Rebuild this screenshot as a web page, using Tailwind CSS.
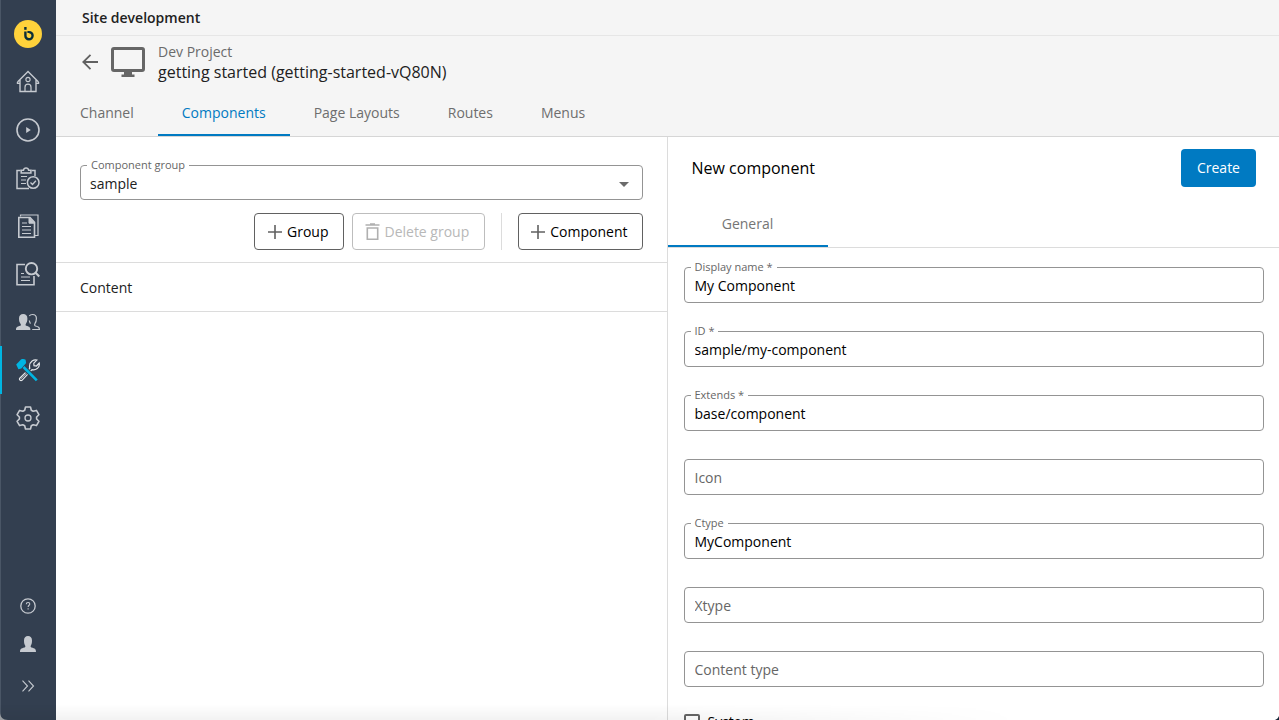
<!DOCTYPE html>
<html lang="en">
<head>
    <meta charset="UTF-8">
    <meta name="viewport" content="width=device-width, initial-scale=1.0">
    <title>Site development</title>
    <script src="https://cdn.jsdelivr.net/npm/@tailwindcss/browser@4"></script>
</head>
<body class="relative flex h-screen overflow-hidden bg-white font-['Open_Sans','Noto_Sans',sans-serif] text-sm text-[#212121]">

    <!-- Sidebar -->
    <nav aria-label="Main" class="flex w-14 shrink-0 flex-col items-stretch bg-[#333f50] pt-[10px] text-[#c6cad0] inset-shadow-[1px_0_0_#4a5666]">
        <a href="#" aria-label="Start" class="flex h-12 items-center justify-center">
            <svg class="size-7" viewBox="0 0 28 28">
                <circle cx="14" cy="14" r="14" fill="#ffd23b"/>
                <path d="M11.400 7v2.800" stroke="#0b2e38" stroke-width="2.400" fill="none"/>
                <path d="M11.400 11.600v3.900a3.600 3.600 0 1 0 3.600-3.400" stroke="#0b2e38" stroke-width="2.400" fill="none"/>
                <path d="M15 12.100h-1.600" stroke="#0b2e38" stroke-width="2" fill="none"/>
            </svg>
        </a>
        <a href="#" aria-label="Home" class="flex h-12 items-center justify-center">
            <svg class="size-6" viewBox="0 0 24 24" fill="none" stroke="currentColor" stroke-width="1.400">
                <path d="M1.500 12 12 1.600 22.500 12M4 10v11.500h16V10"/>
                <path d="M1.500 12v1.400H4M22.500 12v1.400H20"/>
                <circle cx="12" cy="9.500" r="2.100" stroke-width="1.100"/>
                <path d="M9 21.500v-4.300a3 3 0 0 1 6 0v4.300" stroke-width="1.200"/>
            </svg>
        </a>
        <a href="#" aria-label="Preview" class="flex h-12 items-center justify-center">
            <svg class="size-6" viewBox="0 0 24 24" fill="none" stroke="currentColor" stroke-width="1.600">
                <circle cx="12" cy="12" r="11"/>
                <path d="M10.200 9v6l4.600-3z" fill="currentColor" stroke="none"/>
            </svg>
        </a>
        <a href="#" aria-label="Quality" class="flex h-12 items-center justify-center">
            <svg class="size-6" viewBox="0 0 24 24" fill="none" stroke="currentColor" stroke-width="1.500">
                <path d="M13 22.500H1V4.600h3.600M15.500 4.600H19V10"/>
                <path d="M5.200 7V4.200h2.300a2.600 2.600 0 0 1 5.100 0h2.300V7z"/>
                <path d="M5 10.500h6M5 14h5M5 17.500h5" stroke-width="1.200"/>
                <circle cx="17.200" cy="16.500" r="5.800"/>
                <path d="m14.500 16.500 2 2 3.400-3.800" stroke-width="1.300"/>
            </svg>
        </a>
        <a href="#" aria-label="Content" class="flex h-12 items-center justify-center">
            <svg class="size-6" viewBox="0 0 24 24" fill="none" stroke="currentColor" stroke-width="1.600">
                <path d="M4.500 2.500v-1.500h17.500v20.500h-3" stroke-width="1.200"/>
                <path d="M2.800 3.500H14l4.500 4.800v14.900H2.800z"/>
                <path d="M13 3.500v5.700h5.500z" fill="currentColor" stroke-width="1"/>
                <path d="M6 9h5M6 12.500h9M6 16h9M6 19.500h9" stroke-width="1.200"/>
            </svg>
        </a>
        <a href="#" aria-label="Search" class="flex h-12 items-center justify-center">
            <svg class="size-6" viewBox="0 0 24 24" fill="none" stroke="currentColor" stroke-width="1.600">
                <path d="M9 2.500H1v20.200h17V14"/>
                <circle cx="15.500" cy="6.700" r="5.700" stroke-width="1.900"/>
                <path d="m19.600 10.800 3.700 3.700" stroke-width="2.200"/>
                <path d="M5 11.500h3M5 15h9M5 18.500h9" stroke-width="1.200"/>
            </svg>
        </a>
        <a href="#" aria-label="Users" class="flex h-12 items-center justify-center">
            <svg class="size-6" viewBox="0 0 24 24" fill="none" stroke="currentColor" stroke-width="1.200">
                <path d="M0 20c0-3 .8-3.300 4.300-4.300.7-.3.800-1 .3-1.700C3.600 12.500 3 11 3 8.500 3 5.500 4.500 4 7.200 4s4.200 1.500 4.200 4.500c0 2.500-.6 4-1.600 5.500-.4.700-.3 1.400.4 1.700 3.400 1 4.200 1.300 4.200 4.300z" fill="currentColor" stroke="none"/>
                <path d="M13.300 6c.6-1 1.700-1.500 3.200-1.500 2.500 0 3.900 1.300 3.900 4 0 2.300-.5 3.800-1.500 5.200-.5.900-.3 1.900.6 2.300 3 .8 3.900 1.200 3.900 3.500h-7.200M13.300 10.500c.2 1.200.6 2.200 1.200 3.100"/>
            </svg>
        </a>
        <a href="#" aria-label="Site development" aria-current="page" class="relative flex h-12 items-center justify-center">
            <span class="absolute inset-y-0 left-0 w-[2px] bg-[#00b5e2]"></span>
            <svg class="size-6" viewBox="0 0 24 24" fill="none">
                <path d="m4 20 9.800-9.600c-.7-2.900.3-5.800 2.300-7.300 1.500-1.100 3.200-1.600 4.800-1l-3.100 3.100.2 2.500 2.500.3 2.700-2.900c.5 2.100-.4 4.200-2 5.500-1.600 1.200-3.300 1.600-5.200 1.100L6 22.300c-1.400 1-3.400-.9-2-2.300z" stroke="#e4e7ea" stroke-width="1.200"/>
                <path d="m5 20.800 9-8.800" stroke="#e4e7ea" stroke-width=".7"/>
                <path d="M7.500 9.500 21 22" stroke="#333f50" stroke-width="4.500"/>
                <path d="M7.500 9 20.800 22.300" stroke="#00b5e2" stroke-width="2.600"/>
                <path d="M.2 6.600 5 1.500c1.700-.7 3.500-.5 4.600.3l.5 3.200-4.800 5.500-2.900.7z" fill="#00b5e2"/>
            </svg>
        </a>
        <a href="#" aria-label="Settings" class="flex h-12 items-center justify-center">
            <svg class="size-6" viewBox="0 0 24 24" fill="none" stroke="currentColor" stroke-width="1.600" stroke-linejoin="round">
                <path d="M9.500 1h5l.8 3.200 1.900 1.100 3.200-.9 2.500 4.300-2.300 2.300v2l2.300 2.300-2.500 4.300-3.200-.9-1.900 1.100-.8 3.200h-5l-.8-3.200-1.900-1.100-3.200.9-2.500-4.300L3.400 13v-2L1.100 8.700l2.500-4.300 3.200.9 1.900-1.100z"/>
                <circle cx="12" cy="12" r="3" stroke-width="1.300"/>
            </svg>
        </a>
        <div class="mt-auto flex flex-col items-center pb-3">
            <button type="button" aria-label="Help" class="flex h-9 items-center">
                <svg class="size-4" viewBox="0 0 16 16" fill="none" stroke="currentColor" stroke-width="1.300">
                    <circle cx="8" cy="8" r="7.200"/>
                    <path d="M6.300 6.300c0-1.200.7-1.800 1.800-1.800 1 0 1.700.6 1.700 1.500 0 1.300-1.700 1.300-1.700 3M8.100 10.200v1.400" stroke-width="1.100"/>
                </svg>
            </button>
            <button type="button" aria-label="Account" class="flex h-10 items-center">
                <svg class="size-4" viewBox="0 0 16 16" fill="currentColor">
                    <path d="M0 16c0-3 .9-3.500 4.600-4.500.9-.3 1-1.200.5-1.900C4.400 8.400 4 7 4 4.600 4 1.500 5.500 0 8 0s4 1.500 4 4.600c0 2.400-.4 3.800-1.100 5-.5.700-.4 1.600.5 1.900 3.700 1 4.600 1.500 4.600 4.500z"/>
                </svg>
            </button>
            <button type="button" aria-label="Expand menu" class="flex h-11 items-center">
                <svg class="h-3 w-[14px]" viewBox="0 0 14 12" fill="none" stroke="currentColor" stroke-width="1.100">
                    <path d="m1.500.7 5 5.300-5 5.300M7.500.7l5 5.300-5 5.300"/>
                </svg>
            </button>
        </div>
    </nav>

    <div class="flex min-w-0 flex-1 flex-col">

        <!-- Header -->
        <header class="border-b border-[#d6d6d6] bg-[#f5f5f5]">
            <div class="flex h-9 items-center border-b border-[#e6e6e6] px-[26px] font-semibold">Site development</div>
            <div class="flex h-[51px] items-center px-[26px]">
                <button type="button" aria-label="Back" class="mr-3">
                    <svg class="size-4" viewBox="0 0 16 16" fill="none" stroke="#616161" stroke-width="1.800">
                        <path d="M16 8H1.500M8.500.8 1.300 8l7.200 7.200"/>
                    </svg>
                </button>
                <svg class="mr-3 h-[30px] w-9" viewBox="0 0 36 30" fill="none">
                    <rect x="2.500" y="1.500" width="31" height="22" rx="1.500" stroke="#666" stroke-width="3"/>
                    <path d="M14 24h8v3.500h2.500V30h-13v-2.500H14z" fill="#666"/>
                </svg>
                <div>
                    <div class="leading-5 text-[#6b6b6b]">Dev Project</div>
                    <h1 class="text-base leading-5">getting started (getting-started-vQ80N)</h1>
                </div>
            </div>
            <nav aria-label="Sections" class="flex h-[49px] text-[#6e6e6e]">
                <a href="#" class="flex items-center border-b-2 border-transparent px-6 pt-1">Channel</a>
                <a href="#" aria-current="page" class="flex items-center border-b-2 border-[#007ac2] px-6 pt-1 text-[#007ac2]">Components</a>
                <a href="#" class="flex items-center border-b-2 border-transparent px-6 pt-1">Page Layouts</a>
                <a href="#" class="flex items-center border-b-2 border-transparent px-6 pt-1">Routes</a>
                <a href="#" class="flex items-center border-b-2 border-transparent px-6 pt-1">Menus</a>
            </nav>
        </header>

        <main class="grid min-h-0 flex-1 grid-cols-2">

            <!-- Component list -->
            <section class="border-r border-[#dcdcdc]">
                <div class="border-b border-[#dcdcdc] px-6 pt-7 pb-3">
                    <div class="relative">
                        <label for="group" class="absolute -top-2 left-[7px] bg-white px-1 text-[11px] leading-4 text-[#666]">Component group</label>
                        <select id="group" class="block h-[35px] w-full appearance-none rounded border border-[#949494] bg-transparent px-[9px] pt-[2px]">
                            <option>sample</option>
                        </select>
                        <svg class="pointer-events-none absolute top-[17px] right-[14px] h-[5px] w-[10px]" viewBox="0 0 10 5"><path d="M0 0h10L5 5z" fill="#6b6b6b"/></svg>
                    </div>
                    <div class="mt-[13px] flex h-[37px] justify-end">
                        <button type="button" class="mr-2 flex items-center gap-1 rounded border border-[#616161] pr-[15px] pl-3 text-black">
                            <svg class="size-4" viewBox="0 0 16 16" stroke="#616161" stroke-width="1.600"><path d="M8 1v14M1 8h14"/></svg>
                            Group
                        </button>
                        <button type="button" disabled class="flex items-center gap-1 rounded border border-[#bdbdbd] pr-[15px] pl-3 text-[#b8b8b8]">
                            <svg class="h-[18px] w-[15px]" viewBox="0 0 15 18" fill="none" stroke="#b0b0b0" stroke-width="1.600"><path d="M.5 2h14M5 1h5M2.300 5v11.200h10.400V5z"/></svg>
                            Delete group
                        </button>
                        <div class="mx-4 w-px bg-[#dcdcdc]"></div>
                        <button type="button" class="flex items-center gap-1 rounded border border-[#616161] pr-[14px] pl-[11px] text-black">
                            <svg class="size-4" viewBox="0 0 16 16" stroke="#616161" stroke-width="1.600"><path d="M8 1v14M1 8h14"/></svg>
                            Component
                        </button>
                    </div>
                </div>
                <div class="flex h-[49px] items-center border-b border-[#dcdcdc] px-6 pt-[2px]">Content</div>
            </section>

            <!-- New component form -->
            <form class="flex min-h-0 flex-col overflow-hidden text-black">
                <div class="flex items-center justify-between py-3 pr-[23px] pl-6">
                    <h2 class="text-base">New component</h2>
                    <button type="button" class="h-[38px] rounded bg-[#007ac2] px-4 font-medium text-white">Create</button>
                </div>
                <div class="flex h-[49px] shrink-0 border-b border-[#dcdcdc]">
                    <button type="button" class="w-40 border-b-2 border-[#007ac2] pt-1 text-[#757575]">General</button>
                </div>
                <div class="flex min-h-0 flex-1 flex-col gap-7 overflow-hidden pt-[19px] pr-[15px] pl-4">
                    <div class="relative">
                        <label for="displayName" class="absolute -top-2 left-[7px] bg-white px-1 text-[11px] leading-4 text-[#666]">Display name *</label>
                        <input id="displayName" type="text" value="My Component" class="block h-9 w-full rounded border border-[#949494] px-[10px]">
                    </div>
                    <div class="relative">
                        <label for="id" class="absolute -top-2 left-[7px] bg-white px-1 text-[11px] leading-4 text-[#666]">ID *</label>
                        <input id="id" type="text" value="sample/my-component" class="block h-9 w-full rounded border border-[#949494] px-[10px]">
                    </div>
                    <div class="relative">
                        <label for="extends" class="absolute -top-2 left-[7px] bg-white px-1 text-[11px] leading-4 text-[#666]">Extends *</label>
                        <input id="extends" type="text" value="base/component" class="block h-9 w-full rounded border border-[#949494] px-[10px]">
                    </div>
                    <input type="text" aria-label="Icon" placeholder="Icon" class="block h-9 w-full shrink-0 rounded border border-[#949494] px-[10px] placeholder:text-[#666]">
                    <div class="relative">
                        <label for="ctype" class="absolute -top-2 left-[7px] bg-white px-1 text-[11px] leading-4 text-[#666]">Ctype</label>
                        <input id="ctype" type="text" value="MyComponent" class="block h-9 w-full rounded border border-[#949494] px-[10px]">
                    </div>
                    <input type="text" aria-label="Xtype" placeholder="Xtype" class="block h-9 w-full shrink-0 rounded border border-[#949494] px-[10px] placeholder:text-[#666]">
                    <input type="text" aria-label="Content type" placeholder="Content type" class="block h-9 w-full shrink-0 rounded border border-[#949494] px-[10px] placeholder:text-[#666]">
                    <label class="-mt-[3px] flex items-center gap-2">
                        <input type="checkbox" class="size-4 appearance-none rounded-[2px] border-2 border-[#666]">
                        System
                    </label>
                </div>
            </form>
        </main>
    </div>

    <!-- Window corners and bottom shade -->
    <div class="pointer-events-none absolute inset-x-0 bottom-0 h-4 bg-linear-to-t from-black/5 to-transparent mask-r-from-50% mask-r-to-80%"></div>
    <svg class="pointer-events-none absolute bottom-0 left-0 size-2" viewBox="0 0 8 8"><path d="M0 0c0 5 3 8 8 8H0z" fill="#9a9da1"/></svg>
    <svg class="pointer-events-none absolute right-0 bottom-0 size-1" viewBox="0 0 4 4"><path d="M4 0v4H0c2-.7 3.300-2 4-4z" fill="#122436"/></svg>
</body>
</html>
